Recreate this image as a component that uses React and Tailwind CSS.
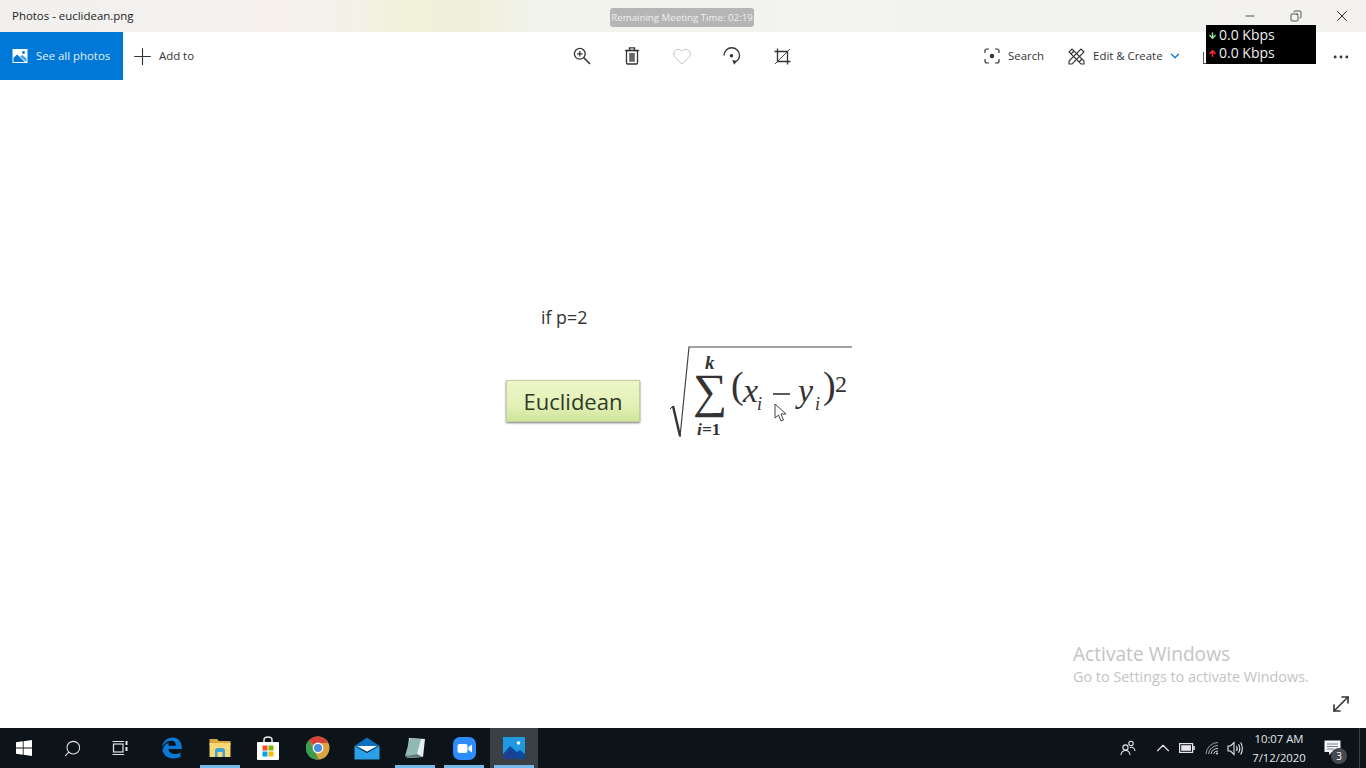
import React from "react";
import { ArrowDown, ArrowUp, Plus, Heart, ChevronDown, ChevronUp, X, Minus, Copy, Search, MoveDiagonal, Ellipsis } from "lucide-react";

const SEGOE = "font-['Open_Sans','Noto_Sans',sans-serif]";

const PhotoIcon = ({ size = 16 }) => (
  <svg width={size} height={size} viewBox="0 0 16 16">
    <rect x="0.5" y="1" width="15" height="14" fill="#fff" />
    <circle cx="11.5" cy="4.5" r="1.4" fill="#0078d7" />
    <path d="M1.5 10 L5 6.5 L13 14 L1.5 14 Z" fill="#0078d7" />
    <path d="M8 8.5 L10.5 7 L14.5 10.5 L14.5 14 Z" fill="#0078d7" opacity="0.7" />
  </svg>
);

const ZoomGlassIcon = () => (
  <svg width="18" height="18" viewBox="0 0 18 18" fill="none" stroke="#333" strokeWidth="1.3">
    <circle cx="6.8" cy="6.8" r="5.4" />
    <path d="M10.8 10.8 L17 17" strokeWidth="1.6" />
    <path d="M4 6.8 H9.6 M6.8 4 V9.6" />
  </svg>
);

const TrashIcon = () => (
  <svg width="18" height="20" viewBox="0 0 18 20" fill="none" stroke="#333" strokeWidth="1.3">
    <path d="M2 4.5 H16" />
    <path d="M6.5 4 V1.8 H11.5 V4" />
    <rect x="3.5" y="4.5" width="11" height="13.5" rx="1" />
    <rect x="6.2" y="7" width="5.6" height="8.8" fill="#666" stroke="none" />
  </svg>
);

const RotateIcon = () => (
  <svg width="18" height="18" viewBox="0 0 18 18" fill="none" stroke="#333" strokeWidth="1.3">
    <path d="M1 8.5 A7.5 7.5 0 0 1 16.5 8.5 A7.5 7.5 0 0 1 12 15" />
    <path d="M9.2 13 L11.2 17.8 L14 14" fill="#333" stroke="none" />
    <circle cx="8.5" cy="8.8" r="1.7" fill="#333" stroke="none" />
  </svg>
);

const CropIcon = () => (
  <svg width="17" height="17" viewBox="0 0 17 17" fill="none" stroke="#333" strokeWidth="1.3">
    <path d="M3.5 0.5 V13.5 H16.5" />
    <path d="M0.5 3.5 H13.5 V16.5" />
    <path d="M1 16 L16 1" strokeWidth="0.9" />
  </svg>
);

const SearchFrameIcon = () => (
  <svg width="16" height="16" viewBox="0 0 16 16" fill="none" stroke="#333" strokeWidth="1.2">
    <path d="M1 5 V3 Q1 1 3 1 H5 M11 1 H13 Q15 1 15 3 V5 M15 11 V13 Q15 15 13 15 H11 M5 15 H3 Q1 15 1 13 V11" />
    <circle cx="8" cy="8" r="2.2" fill="#333" stroke="none" />
  </svg>
);

const EditCreateIcon = () => (
  <svg width="17" height="17" viewBox="0 0 17 17" fill="none" stroke="#333" strokeWidth="1.1">
    <path d="M1 4 L4 1 L16 13 L16 16 L13 16 Z" />
    <path d="M16 4 L13 1 L1 13 L1 16 L4 16 Z" />
    <path d="M3 6 L6 3 M11 14 L14 11" />
  </svg>
);

const WinLogo = () => (
  <svg width="16" height="16" viewBox="0 0 16 16" fill="#fff">
    <path d="M0 2.3 L6.8 1.3 V7.5 H0 Z M7.6 1.2 L16 0 V7.5 H7.6 Z M0 8.4 H6.8 V14.7 L0 13.7 Z M7.6 8.4 H16 V16 L7.6 14.8 Z" />
  </svg>
);

const TaskViewIcon = () => (
  <svg width="17" height="16" viewBox="0 0 17 16" fill="none" stroke="#e5e7eb" strokeWidth="1.2">
    <rect x="1.5" y="4" width="9.5" height="8" />
    <path d="M0.5 1.5 H12 M0.5 14.5 H12" />
    <path d="M14.5 1 V5 M14.5 7 V11" strokeWidth="2" />
  </svg>
);

const EdgeIcon = () => (
  <svg width="22" height="22" viewBox="0 0 22 22">
    <path
      d="M1 10 C2 3.5 7 0.5 11.5 0.5 C17.5 0.5 21 5 21 12 L7.5 12 C7.8 17 14.5 18.5 19.5 15.5 L19.5 20 C13 23 2.5 21.5 1.5 13 C3 8 5.5 6.5 7.8 6 C7.5 7 7.5 8 7.5 8.8 L14.8 8.8 C15 5 12.5 3.5 10 3.7 C6 4 3 6.5 1 10 Z"
      fill="#0b78d6"
    />
  </svg>
);

const ExplorerIcon = () => (
  <svg width="22" height="20" viewBox="0 0 22 20">
    <path d="M0.5 1 H8 L10 3 H21.5 V7 H0.5 Z" fill="#d9a93f" />
    <rect x="0.5" y="5" width="21" height="14" fill="#f8d775" />
    <path d="M6 19 V13 Q6 10 9 10 H13 Q16 10 16 13 V19 H13.5 V14 H8.5 V19 Z" fill="#3ba3d8" />
  </svg>
);

const StoreIcon = () => (
  <svg width="24" height="25" viewBox="0 0 24 25">
    <path d="M8 7 V4 Q8 1 12 1 Q16 1 16 4 V7" fill="none" stroke="#eee" strokeWidth="1.5" />
    <rect x="1" y="6" width="22" height="18" rx="1" fill="#fff" />
    <rect x="6.5" y="9.5" width="5" height="5" fill="#f25022" />
    <rect x="12.5" y="9.5" width="5" height="5" fill="#7fba00" />
    <rect x="6.5" y="15.5" width="5" height="5" fill="#00a4ef" />
    <rect x="12.5" y="15.5" width="5" height="5" fill="#ffb900" />
  </svg>
);

const ChromeIcon = () => (
  <svg width="24" height="24" viewBox="0 0 24 24">
    <circle cx="12" cy="12" r="11.5" fill="#d9a441" />
    <path d="M12 0.5 A11.5 11.5 0 0 1 22 7 H12 A5 5 0 0 0 7.4 10 L3 4 A11.5 11.5 0 0 1 12 0.5 Z" fill="#d8443a" />
    <path d="M3 4 L8 13 L12.5 23.5 A11.5 11.5 0 0 1 3 4 Z" fill="#3f9c4d" />
    <circle cx="12" cy="12" r="5.4" fill="#fff" />
    <circle cx="12" cy="12" r="4.1" fill="#4a8fe0" />
  </svg>
);

const MailIcon = () => (
  <svg width="26" height="23" viewBox="0 0 26 23">
    <path d="M0.5 9 L13 0.5 L25.5 9 L13 15 Z" fill="#0c6fc0" />
    <path d="M3 9 H23 L13 14.5 Z" fill="#fff" />
    <path d="M0.5 9 L13 16 L25.5 9 V22.5 H0.5 Z" fill="#2aa0e8" />
  </svg>
);

const NotesIcon = () => (
  <svg width="22" height="22" viewBox="0 0 22 22">
    <path d="M5 1 L21 2 L19 20 L3 21 Z" fill="#e7eeee" />
    <path d="M6 1.5 L17 2 L13 17 L1 19 Z" fill="#8fb9b2" />
    <path d="M1 19 L13 17 L19 20 L3 21 Z" fill="#5f7f7c" />
  </svg>
);

const ZoomAppIcon = () => (
  <svg width="23" height="23" viewBox="0 0 23 23">
    <rect width="23" height="23" rx="7" fill="#2d8cff" />
    <rect x="4.5" y="7" width="10" height="9" rx="2" fill="#fff" />
    <path d="M15.5 10 L19 7.5 V15.5 L15.5 13 Z" fill="#fff" />
  </svg>
);

const PhotosAppIcon = () => (
  <svg width="22" height="22" viewBox="0 0 22 22">
    <rect width="22" height="22" fill="#1f9ae0" />
    <circle cx="15.5" cy="6" r="1.8" fill="#fff" />
    <path d="M0 17 L7 9 L14 15 L17 13 L22 17 V22 H0 Z" fill="#0b4a9c" />
    <path d="M0 19 L7 12 L14 19 V22 H0 Z" fill="#1c3f8f" />
  </svg>
);

const PeopleIcon = () => (
  <svg width="16" height="16" viewBox="0 0 16 16" fill="none" stroke="#e5e7eb" strokeWidth="1.1">
    <circle cx="5.5" cy="7.5" r="2.6" />
    <path d="M1 15 Q1.5 10.5 5.5 10.5 Q9.5 10.5 10 15" />
    <circle cx="11" cy="3.5" r="2.2" />
    <path d="M10 7.5 Q14.5 6.5 15 11" />
  </svg>
);

const BatteryIcon = () => (
  <svg width="16" height="10" viewBox="0 0 16 10">
    <rect x="0.6" y="0.6" width="13" height="8.8" fill="none" stroke="#e5e7eb" strokeWidth="1.2" />
    <rect x="2.2" y="2.2" width="9.8" height="5.6" fill="#e5e7eb" />
    <rect x="14.2" y="3" width="1.6" height="4" fill="#e5e7eb" />
  </svg>
);

const WifiIcon = () => (
  <svg width="14" height="14" viewBox="0 0 14 14" fill="none" stroke="#d1d5db" strokeWidth="1">
    <path d="M1 13 A12 12 0 0 1 13 1.5" opacity="0.7" />
    <path d="M3.5 13 A9.5 9.5 0 0 1 13 4.5" opacity="0.8" />
    <path d="M6 13 A7 7 0 0 1 13 7.5" />
    <path d="M8.5 13 A4.5 4.5 0 0 1 13 10" />
    <circle cx="12" cy="12.5" r="1" fill="#e5e7eb" stroke="none" />
  </svg>
);

const VolumeIcon = () => (
  <svg width="17" height="15" viewBox="0 0 17 15" fill="none" stroke="#e5e7eb" strokeWidth="1.1">
    <path d="M1 5 H3.5 L7 1.5 V13.5 L3.5 10 H1 Z" />
    <path d="M9.5 5 Q11 7.5 9.5 10" />
    <path d="M11.5 3.2 Q14 7.5 11.5 11.8" />
    <path d="M13.7 1.5 Q17 7.5 13.7 13.5" />
  </svg>
);

const NotifyIcon = () => (
  <svg width="17" height="16" viewBox="0 0 17 16">
    <path d="M0.5 0.5 H16.5 V12 H8 L5 15 V12 H0.5 Z" fill="#f3f4f6" />
    <path d="M3 4 H14 M3 6.5 H14 M3 9 H10" stroke="#6b7280" strokeWidth="0.9" />
  </svg>
);

// formula is a picture in the reference, the glyphs stay real text
const Formula = () => (
  <svg width="190" height="98" viewBox="0 0 190 98" className="font-['Liberation_Serif',serif]" fill="#333">
    <path d="M2 65 L5 62" fill="none" stroke="#333" strokeWidth="1" />
    <path d="M5 62 L12 92" fill="none" stroke="#333" strokeWidth="2.4" />
    <path d="M12 93 L21 3 H184" fill="none" stroke="#444" strokeWidth="1.2" />
    <text x="37" y="25" fontSize="19" fontStyle="italic" fontWeight="700">k</text>
    <text x="25" y="63" fontSize="48">∑</text>
    <text x="29" y="91" fontSize="17.5" fontWeight="700"><tspan fontStyle="italic">i</tspan>=1</text>
    <text x="63" y="54" fontSize="38">(</text>
    <text x="75" y="58" fontSize="34" fontStyle="italic">x</text>
    <text x="89" y="66" fontSize="18" fontStyle="italic">i</text>
    <path d="M105 50 H122" stroke="#333" strokeWidth="1.6" />
    <text x="130" y="58" fontSize="34" fontStyle="italic">y</text>
    <text x="147" y="66" fontSize="18" fontStyle="italic">i</text>
    <text x="155" y="54" fontSize="38">)</text>
    <text x="167" y="48" fontSize="24">2</text>
  </svg>
);

const Cursor = () => (
  <svg width="14" height="20" viewBox="0 0 14 20" className="absolute left-[774px] top-[323px]">
    <path d="M1 1 V15 L4.5 12 L7 18 L9.5 17 L7 11 L12 11 Z" fill="#fff" stroke="#444" strokeWidth="1" />
  </svg>
);

const ToolIcon = ({ children }) => (
  <div className="w-[50px] flex items-center justify-center">{children}</div>
);

const TaskItem = ({ children, running, active, className = "" }) => (
  <div className={`relative w-12 h-10 flex items-center justify-center ${active ? "bg-[#3b4045]" : ""} ${className}`}>
    {children}
    {running && <div className="absolute bottom-0 left-1 right-1 h-[3px] bg-[#76b9ed]" />}
  </div>
);

export default function App() {
  return (
    <div className={`relative w-full h-screen flex flex-col overflow-hidden bg-white ${SEGOE}`}>
      {/* title bar */}
      <div className="h-8 shrink-0 flex items-center justify-between bg-[linear-gradient(90deg,#f1f0ee_0%,#f3f2f1_15%,#f6f0ec_20%,#f2f2e8_26%,#f0f1d8_30%,#eff0dc_35%,#f3f3ee_40%,#f3f2f0_100%)]">
        <span className="pl-3 text-[11.45px] text-[#222]">Photos - euclidean.png</span>
        <div className="flex items-center pr-px text-[#222]">
          <div className="w-[46px] flex justify-center"><Minus size={14} strokeWidth={1.3} /></div>
          <div className="w-[46px] flex justify-center"><Copy size={12} strokeWidth={1.5} className="-scale-x-100" /></div>
          <div className="w-[46px] flex justify-center"><X size={18} strokeWidth={1.3} /></div>
        </div>
      </div>

      {/* toolbar */}
      <div className="h-12 shrink-0 flex items-stretch text-[11.4px] text-[#333]">
        <div className="w-[557px] flex items-stretch">
          <div className="w-[123px] bg-[#0078d7] flex items-center gap-2 pl-3 text-white">
            <PhotoIcon />
            <span className="text-[#e6f1fb]">See all photos</span>
          </div>
          <div className="flex items-center pl-[6px]">
            <Plus size={27} strokeWidth={1} />
            <span className="ml-[3px]">Add to</span>
          </div>
        </div>
        <div className="flex items-stretch">
          <ToolIcon><ZoomGlassIcon /></ToolIcon>
          <ToolIcon><TrashIcon /></ToolIcon>
          <ToolIcon><Heart size={20} strokeWidth={1.1} className="text-[#bdbdbd]" /></ToolIcon>
          <ToolIcon><RotateIcon /></ToolIcon>
          <ToolIcon><CropIcon /></ToolIcon>
        </div>
        <div className="flex-1 flex items-center pl-[177px]">
          <SearchFrameIcon />
          <span className="ml-2">Search</span>
          <div className="ml-6"><EditCreateIcon /></div>
          <span className="ml-2">Edit &amp; Create</span>
          <ChevronDown size={14} strokeWidth={2.2} className="ml-[5px] text-[#0078d7]" />
          {/* icon hidden behind the network meter, only its edge shows */}
          <div className="ml-[21px] mt-1 w-2 h-3 border-l border-b border-[#555]" />
          <Ellipsis size={20} strokeWidth={1.5} className="ml-[120px] mt-[1px]" />
        </div>
      </div>

      {/* photo */}
      <div className="flex-1 relative pl-[506px] pt-[225px]">
        <div className="pl-[35px] text-[17.8px] leading-6 text-[#333]">if p=2</div>
        <div className="flex items-start mt-[2px]">
          <div className="mt-[49px] w-[134px] h-[42px] flex items-center justify-center bg-[linear-gradient(180deg,#eef6c8_0%,#e3f1b8_60%,#cfe59a_100%)] border border-[#c4ce9f] shadow-[0_1px_2px_#777] text-[22px] font-medium text-[#2f3a28]">
            Euclidean
          </div>
          <div className="ml-7 mt-[13px]"><Formula /></div>
        </div>
        <Cursor />
        <div className="absolute left-[1073px] top-[562px] text-[#c4c4c4]">
          <div className="text-[19.15px] leading-6">Activate Windows</div>
          <div className="text-[14.4px] leading-[22px]">Go to Settings to activate Windows.</div>
        </div>
        <MoveDiagonal size={24} strokeWidth={1.6} className="absolute left-[1329px] top-[612px] text-[#333]" />
      </div>

      {/* taskbar */}
      <div className="h-10 shrink-0 flex items-center bg-[#0c1319] text-[#e5e7eb]">
        <TaskItem><WinLogo /></TaskItem>
        <TaskItem><Search size={19} strokeWidth={1.3} className="-scale-x-100" /></TaskItem>
        <TaskItem><TaskViewIcon /></TaskItem>
        <TaskItem className="ml-1"><EdgeIcon /></TaskItem>
        <TaskItem running><ExplorerIcon /></TaskItem>
        <TaskItem><StoreIcon /></TaskItem>
        <TaskItem className="ml-[2px]"><ChromeIcon /></TaskItem>
        <TaskItem className="ml-px"><MailIcon /></TaskItem>
        <TaskItem running><NotesIcon /></TaskItem>
        <TaskItem running className="ml-px"><ZoomAppIcon /></TaskItem>
        <TaskItem running active className="ml-[2px]"><PhotosAppIcon /></TaskItem>

        <div className="ml-auto flex items-center">
          <PeopleIcon />
          <ChevronUp size={22} strokeWidth={1.2} className="ml-4" />
          <div className="ml-[5px]"><BatteryIcon /></div>
          <div className="ml-[10px]"><WifiIcon /></div>
          <div className="ml-[8px]"><VolumeIcon /></div>
          <div className="ml-[2px] w-[66px] text-center text-[11.3px] leading-[19px]">
            <div>10:07 AM</div>
            <div>7/12/2020</div>
          </div>
          <div className="relative ml-3">
            <NotifyIcon />
            <div className="absolute -right-[6px] top-2 w-4 h-4 rounded-full bg-[#454a4f] text-[10px] leading-4 text-center text-white">3</div>
          </div>
          <div className="ml-[18px] mr-[6px] w-px h-10 bg-[#3b4045]" />
        </div>
      </div>

      {/* overlays from the recording */}
      <div className="absolute left-[610px] top-2 w-[144px] h-[19px] rounded-[3px] bg-[#b5b5b5] text-[9.7px] leading-[19px] text-center text-[#efefef] whitespace-nowrap">
        Remaining Meeting Time: 02:19
      </div>
      <div className="absolute left-[1206px] top-[25px] w-[110px] h-[39px] bg-black text-[14px] leading-[18px] text-[#eee] py-[1px] pl-[2px]">
        <div className="flex items-center gap-[2px]"><ArrowDown size={9} strokeWidth={4} className="text-[#8de29a]" />0.0 Kbps</div>
        <div className="flex items-center gap-[2px]"><ArrowUp size={9} strokeWidth={4} className="text-[#ff2a2a]" />0.0 Kbps</div>
      </div>
    </div>
  );
}
